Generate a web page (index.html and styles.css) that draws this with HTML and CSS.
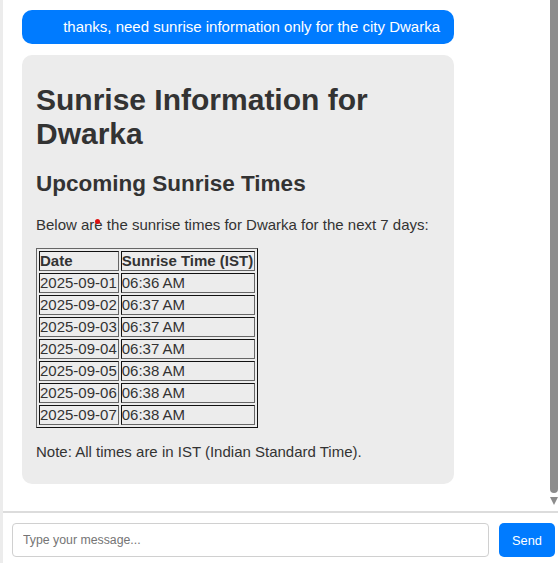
FILE: index.html
```html
<!DOCTYPE html>
<html lang="en">
<head>
<meta charset="utf-8">
<title>Chat</title>
<link rel="stylesheet" href="styles.css">
</head>
<body>
<div class="app">
  <div class="messages-wrap">
    <div class="messages">
      <div class="bubble user">thanks, need sunrise information only for the city Dwarka</div>
      <div class="bubble bot">
        <span class="dot"></span>
        <h1>Sunrise Information for Dwarka</h1>
        <h2>Upcoming Sunrise Times</h2>
        <p>Below are the sunrise times for Dwarka for the next 7 days:</p>
        <table class="sun-table">
          <thead>
            <tr><th>Date</th><th>Sunrise Time (IST)</th></tr>
          </thead>
          <tbody>
            <tr><td>2025-09-01</td><td>06:36 AM</td></tr>
            <tr><td>2025-09-02</td><td>06:37 AM</td></tr>
            <tr><td>2025-09-03</td><td>06:37 AM</td></tr>
            <tr><td>2025-09-04</td><td>06:37 AM</td></tr>
            <tr><td>2025-09-05</td><td>06:38 AM</td></tr>
            <tr><td>2025-09-06</td><td>06:38 AM</td></tr>
            <tr><td>2025-09-07</td><td>06:38 AM</td></tr>
          </tbody>
        </table>
        <p>Note: All times are in IST (Indian Standard Time).</p>
      </div>
    </div>
    <div class="scrollbar">
      <div class="thumb"></div>
      <div class="arrow"></div>
    </div>
  </div>
  <div class="input-bar">
    <input class="msg-input" type="text" placeholder="Type your message...">
    <button class="send-btn" type="button">Send</button>
  </div>
</div>
</body>
</html>
```

FILE: styles.css
```css
html, body {
  margin: 0;
  padding: 0;
  height: 100%;
  overflow: hidden;
}
body {
  background: #ececec;
  font-family: "Liberation Sans", Arial, sans-serif;
  font-size: 15px;
  color: #333;
}
.app {
  margin-left: 3px;
  height: 563px;
  background: #fff;
  display: flex;
  flex-direction: column;
}
.messages-wrap {
  height: 511px;
  display: flex;
  flex-shrink: 0;
}
.messages {
  flex: 1;
  padding: 10px 0 0 19px;
  overflow: hidden;
  display: flex;
  flex-direction: column;
  gap: 11px;
}
.bubble {
  width: 432px;
  box-sizing: border-box;
  border-radius: 10px;
}
.user {
  background: #007bff;
  color: #fff;
  text-align: right;
  padding: 8px 14px;
  line-height: 18px;
}
.bot {
  position: relative;
  background: #ececec;
  padding: 8px 14px 9px;
  color: #333;
}
.bot h1 {
  font-size: 30px;
  margin: 20px 0;
  line-height: 34px;
}
.bot h2 {
  font-size: 22.5px;
  margin: 19px 0;
}
.bot p {
  margin: 15px 0;
}
.dot {
  position: absolute;
  left: 73px;
  top: 164px;
  width: 5px;
  height: 5px;
  border-radius: 50%;
  background: #e01010;
}
.sun-table {
  margin-top: 1px;
  border: 1px outset #666;
  border-spacing: 2px;
}
.sun-table th,
.sun-table td {
  border: 1px inset #666;
  padding: 0 1px 0 0;
  line-height: 18px;
  text-align: left;
}
.sun-table th {
  font-weight: bold;
}
.scrollbar {
  width: 10px;
  display: flex;
  flex-direction: column;
  align-items: flex-end;
}
.thumb {
  width: 8px;
  height: 493px;
  background: #8c8c8c;
  border-radius: 0 0 4px 4px;
}
.arrow {
  margin-top: 4px;
  width: 0;
  height: 0;
  border-left: 4px solid transparent;
  border-right: 4px solid transparent;
  border-top: 8px solid #8c8c8c;
}
.input-bar {
  border-top: 2px solid #dcdcdc;
  display: flex;
  gap: 10px;
  padding: 10px 3px 6px 9px;
}
.msg-input {
  flex: 1;
  height: 34px;
  box-sizing: border-box;
  border: 1px solid #d0d0d0;
  border-radius: 4px;
  padding: 0 10px;
  font-family: "Liberation Sans", Arial, sans-serif;
  font-size: 12.3px;
  color: #333;
  outline: none;
}
.msg-input::placeholder {
  color: #757575;
}
.send-btn {
  width: 56px;
  height: 34px;
  background: #007bff;
  color: #fff;
  border: none;
  border-radius: 5px;
  font-family: "Liberation Sans", Arial, sans-serif;
  font-size: 12.8px;
}
```
